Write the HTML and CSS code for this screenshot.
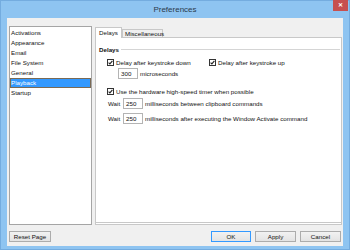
FILE: index.html
```html
<!DOCTYPE html>
<html lang="en">
<head>
    <meta charset="UTF-8">
    <title>Preferences</title>
    <link rel="stylesheet" href="styles.css">
</head>
<body>
    <div class="window">
        <div class="titlebar">
            <div class="title">Preferences</div>
            <div class="close">&#x2715;</div>
        </div>
        <div class="client">
            <ul class="pages">
                <li>Activations</li>
                <li>Appearance</li>
                <li>Email</li>
                <li>File System</li>
                <li>General</li>
                <li class="selected">Playback</li>
                <li>Startup</li>
            </ul>

            <div class="tabs">
                <div class="tab-strip">
                    <div class="tab active">Delays</div>
                    <div class="tab">Miscellaneous</div>
                </div>
                <div class="tab-page">
                    <div class="group-head">
                        <span class="group-label">Delays</span>
                        <span class="group-line"></span>
                    </div>
                    <div class="group-body">
                        <div class="row row-check">
                            <label class="check first">
                                <svg width="7" height="7" viewBox="0 0 7 7"><rect x="0.5" y="0.5" width="6" height="6" fill="#fff" stroke="#333"/><path d="M1.6 3.6 L2.9 4.9 L5.4 1.8" fill="none" stroke="#222" stroke-width="1.1"/></svg>
                                Delay after keystroke down
                            </label>
                            <label class="check">
                                <svg width="7" height="7" viewBox="0 0 7 7"><rect x="0.5" y="0.5" width="6" height="6" fill="#fff" stroke="#333"/><path d="M1.6 3.6 L2.9 4.9 L5.4 1.8" fill="none" stroke="#222" stroke-width="1.1"/></svg>
                                Delay after keystroke up
                            </label>
                        </div>
                        <div class="row row-micro">
                            <span class="field">300</span>
                            <span>microseconds</span>
                        </div>
                        <div class="row row-timer">
                            <label class="check">
                                <svg width="7" height="7" viewBox="0 0 7 7"><rect x="0.5" y="0.5" width="6" height="6" fill="#fff" stroke="#333"/><path d="M1.6 3.6 L2.9 4.9 L5.4 1.8" fill="none" stroke="#222" stroke-width="1.1"/></svg>
                                Use the hardware high-speed timer when possible
                            </label>
                        </div>
                        <div class="row row-wait">
                            <span class="wait">Wait</span>
                            <span class="field">250</span>
                            <span>milliseconds between clipboard commands</span>
                        </div>
                        <div class="row row-wait second">
                            <span class="wait">Wait</span>
                            <span class="field">250</span>
                            <span>milliseconds after executing the Window Activate command</span>
                        </div>
                    </div>
                </div>
            </div>

            <div class="footer">
                <button class="btn reset">Reset Page</button>
                <div class="actions">
                    <button class="btn default">OK</button>
                    <button class="btn">Apply</button>
                    <button class="btn">Cancel</button>
                </div>
            </div>
        </div>
    </div>
</body>
</html>
```

FILE: styles.css
```css
* {
    box-sizing: border-box;
}
body {
    margin: 0;
    background: #8ec4f1;
    font-family: 'Liberation Sans', Arial, sans-serif;
}
.window {
    width: 350px;
    height: 250px;
    display: flex;
    flex-direction: column;
    background: #8ec4f1;
    border: 1px solid #74acdf;
}
.titlebar {
    height: 17px;
    display: flex;
    align-items: flex-start;
    padding-left: 16px;
}
.title {
    flex: 1;
    text-align: center;
    font-size: 8px;
    color: #2b3a4a;
    padding-top: 4px;
}
.close {
    width: 15px;
    height: 11px;
    margin-top: -1px;
    margin-right: 1px;
    background: #c75050;
    color: #fff;
    font-size: 6px;
    font-weight: bold;
    text-align: center;
    line-height: 11px;
}
.client {
    flex: 1;
    margin: 0 6px 3px 6px;
    background: #f0f0f0;
    display: grid;
    grid-template-columns: 83px 1fr;
    grid-template-rows: 1fr auto;
    column-gap: 3px;
    padding: 8px 1px 4px 2px;
    font-size: 6.2px;
    color: #111;
}
.pages {
    list-style: none;
    margin: 0;
    padding: 1px 0 0 0;
    background: #fff;
    border: 1px solid #a5a5a5;
}
.pages li {
    height: 10px;
    line-height: 10px;
    padding-left: 1px;
}
.pages li.selected {
    background: #3399ff;
    color: #fff;
    outline: 1px solid #7a6a55;
    outline-offset: -1px;
}
.tabs {
    display: flex;
    flex-direction: column;
    padding-top: 1px;
}
.tab-strip {
    display: flex;
    align-items: flex-end;
    height: 10px;
}
.tab {
    height: 8px;
    line-height: 7px;
    padding: 0 2px;
    border: 1px solid #c8c8c8;
    border-bottom: none;
    background: #f0f0f0;
    width: 41px;
}
.tab.active {
    height: 11px;
    line-height: 10px;
    width: 27px;
    padding-left: 3px;
    background: #fff;
    margin-bottom: -1px;
    position: relative;
}
.tab-page {
    flex: 1;
    background: #fff;
    border: 1px solid #c8c8c8;
    border-bottom: 3px double #c8c8c8;
    padding: 6px 1px 0 3px;
}
.group-head {
    display: flex;
    align-items: center;
    height: 10px;
}
.group-label {
    font-weight: bold;
    padding-right: 2px;
}
.group-line {
    flex: 1;
    height: 1px;
    background: #d5d5d5;
}
.group-body {
    padding-left: 8px;
}
.row {
    display: flex;
    align-items: center;
}
.row-check {
    height: 10px;
    margin-top: 3px;
}
.check {
    display: flex;
    align-items: center;
    gap: 2px;
    white-space: nowrap;
}
.check svg {
    display: block;
}
.check.first {
    width: 102px;
}
.row-micro {
    margin-top: 1px;
    padding-left: 11px;
    gap: 2px;
    height: 11px;
}
.row-timer {
    margin-top: 7px;
    height: 10px;
}
.row-wait {
    margin-top: 2px;
    height: 11px;
    gap: 2px;
    padding-left: 1px;
}
.row-wait.second {
    margin-top: 4px;
}
.wait {
    width: 13px;
}
.field {
    width: 20px;
    height: 11px;
    line-height: 9px;
    border: 1px solid #b4b4b4;
    background: #fff;
    padding-left: 2px;
}
.footer {
    grid-column: span 2;
    display: flex;
    justify-content: space-between;
    padding-top: 6px;
}
.actions {
    display: flex;
    gap: 4px;
    padding-right: 1px;
}
.btn {
    height: 11px;
    width: 41px;
    padding: 0;
    font-family: inherit;
    font-size: 6.2px;
    color: #111;
    background: linear-gradient(#f2f2f2, #e3e3e3);
    border: 1px solid #acacac;
}
.btn.reset {
    width: 42px;
}
.btn.default {
    width: 40px;
    border-color: #3399ff;
}
```
